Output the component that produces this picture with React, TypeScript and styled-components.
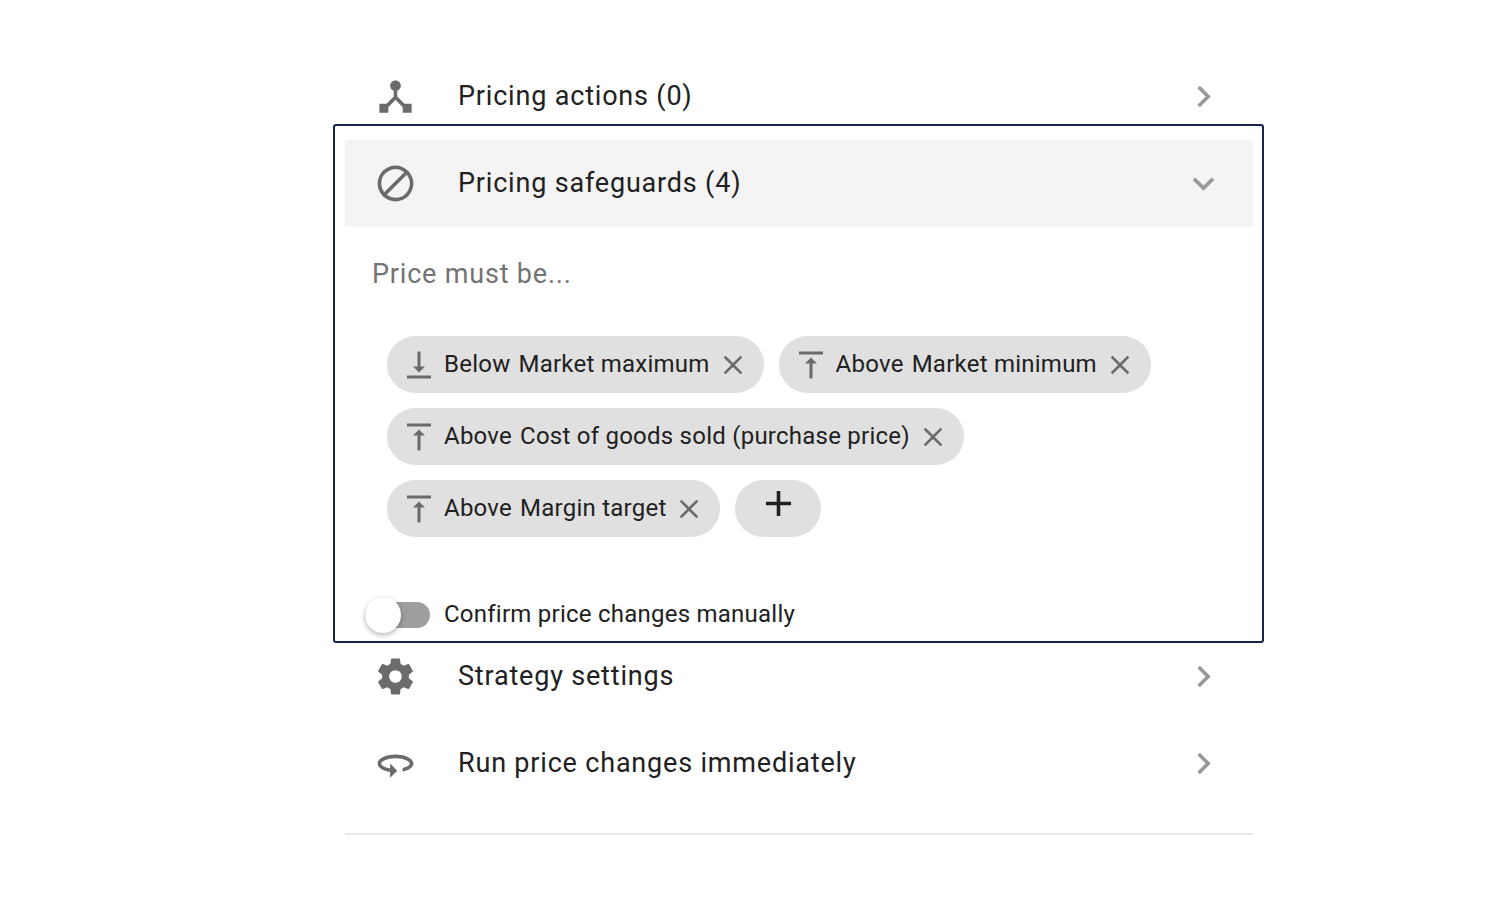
import React, { useState } from "react";
import styled, { createGlobalStyle } from "styled-components";

const GlobalStyle = createGlobalStyle`
  *, *::before { box-sizing: border-box; }
  body {
    margin: 0;
    background: #fff;
    color: #212121;
    font-family: Roboto, "Liberation Sans", sans-serif;
    letter-spacing: 0.015em;
  }
  button { font: inherit; color: inherit; letter-spacing: inherit; }
`;

const Page = styled.main`
  padding: 53px 236px 64px 333px;
`;

const Inset = styled.div`
  margin: 0 11px 0 12px;
`;

const Row = styled.button<{ $open?: boolean }>`
  display: flex;
  align-items: center;
  width: 100%;
  height: 87px;
  padding: 0 28px 0 29px;
  border: 0;
  background: ${(p) => (p.$open ? "#f4f4f4" : "transparent")};
  font-size: 27px;
  letter-spacing: 0.03em;
  text-align: left;
  cursor: pointer;
`;

const RowLabel = styled.span`
  flex: 1;
  margin-left: 41px;
  padding-bottom: 1px;
  line-height: 40px;
`;

const Icon = styled.svg<{ $size: number; $color: string }>`
  display: block;
  flex: none;
  width: ${(p) => p.$size}px;
  height: ${(p) => p.$size}px;
  fill: ${(p) => p.$color};
`;

const Frame = styled.section`
  position: relative;
  margin: -16px 0 -10px;
  padding: 14px 9px 8px 10px;
  border: 2px solid #17234a;
  border-radius: 3px;
`;

const Hint = styled.p`
  margin: 27px 27px 42px;
  color: #737373;
  font-size: 27px;
  letter-spacing: 0.03em;
  line-height: 40px;
`;

const Chips = styled.ul`
  display: flex;
  flex-wrap: wrap;
  gap: 15px;
  margin: 0 42px;
  padding: 0;
  list-style: none;
`;

const Chip = styled.li`
  display: flex;
  align-items: center;
  height: 57px;
  padding: 0 15px 0 14px;
  border-radius: 29px;
  background: #e0e0e0;
  font-size: 24px;
  white-space: nowrap;
`;

const ChipText = styled.span`
  display: flex;
  gap: 8px;
  margin: 0 7px;
  padding-bottom: 2px;
  line-height: 32px;
`;

const RemoveButton = styled.button`
  padding: 0;
  border: 0;
  background: none;
  cursor: pointer;
`;

const AddButton = styled.button`
  display: flex;
  justify-content: center;
  align-items: flex-start;
  width: 86px;
  height: 57px;
  padding: 2px 0 0;
  border: 0;
  border-radius: 29px;
  background: #e0e0e0;
  cursor: pointer;
`;

const SwitchLabel = styled.label`
  display: flex;
  align-items: center;
  gap: 14px;
  width: max-content;
  height: 36px;
  margin: 60px 0 0 20px;
  font-size: 24px;
  cursor: pointer;
`;

const SwitchText = styled.span`
  padding-bottom: 2px;
  line-height: 32px;
`;

const Switch = styled.input`
  position: relative;
  appearance: none;
  width: 65px;
  height: 26px;
  margin: 0;
  border-radius: 13px;
  background: #9e9e9e;
  cursor: pointer;

  &::before {
    content: "";
    position: absolute;
    top: -5px;
    left: 0;
    width: 36px;
    height: 36px;
    border-radius: 50%;
    background: #fff;
    box-shadow: 0 2px 5px rgba(0, 0, 0, 0.3);
  }
  &:checked::before { left: 29px; }
`;

const Divider = styled.hr`
  height: 2px;
  margin: 26px 0 0;
  border: 0;
  background: #e8e8e8;
`;

const paths = {
  hub: "M17 16l-4-4V8.82C14.16 8.4 15 7.3 15 6c0-1.66-1.34-3-3-3S9 4.34 9 6c0 1.3.84 2.4 2 2.82V12l-4 4H3v5h5v-3.05l4-4.2 4 4.2V21h5v-5h-4z",
  block:
    "M12 2a10 10 0 1 0 0 20 10 10 0 0 0 0-20zM4 12a8 8 0 0 1 12.9-6.31L5.69 16.9A7.9 7.9 0 0 1 4 12zm8 8a7.9 7.9 0 0 1-4.9-1.69L18.31 7.1A8 8 0 0 1 12 20z",
  cog: "M19.43 12.98c.04-.32.07-.64.07-.98s-.03-.66-.07-.98l2.11-1.65c.19-.15.24-.42.12-.64l-2-3.46c-.12-.22-.39-.3-.61-.22l-2.49 1c-.52-.4-1.08-.73-1.69-.98l-.38-2.65C14.46 2.18 14.25 2 14 2h-4c-.25 0-.46.18-.49.42l-.38 2.65c-.61.25-1.17.59-1.69.98l-2.49-1c-.23-.09-.49 0-.61.22l-2 3.46c-.13.22-.07.49.12.64l2.11 1.65c-.04.32-.07.65-.07.98s.03.66.07.98l-2.11 1.65c-.19.15-.24.42-.12.64l2 3.46c.12.22.39.3.61.22l2.49-1c.52.4 1.08.73 1.69.98l.38 2.65c.03.24.24.42.49.42h4c.25 0 .46-.18.49-.42l.38-2.65c.61-.25 1.17-.59 1.69-.98l2.49 1c.23.09.49 0 .61-.22l2-3.46c.12-.22.07-.49-.12-.64l-2.11-1.65zM12 15.5c-1.93 0-3.5-1.57-3.5-3.5s1.57-3.5 3.5-3.5 3.5 1.57 3.5 3.5-1.57 3.5-3.5 3.5z",
  orbit:
    "M12 7C6.48 7 2 9.24 2 12c0 2.24 2.94 4.13 7 4.77V20l4-4-4-4v2.73c-3.15-.56-5-1.9-5-2.73 0-1.06 3.04-3 8-3s8 1.94 8 3c0 .73-1.46 1.89-4 2.53v2.05c3.53-.77 6-2.53 6-4.58 0-2.76-4.48-5-10-5z",
  right: "M10 6L8.59 7.41 13.17 12l-4.58 4.59L10 18l6-6z",
  down: "M16.59 8.59L12 13.17 7.41 8.59 6 10l6 6 6-6z",
  below: "M16 13h-3V3h-2v10H8l4 4 4-4zM4 19v2h16v-2H4z",
  above: "M8 11h3v10h2V11h3l-4-4-4 4zM4 3v2h16V3H4z",
  close:
    "M19 6.41L17.59 5 12 10.59 6.41 5 5 6.41 10.59 12 5 17.59 6.41 19 12 13.41 17.59 19 19 17.59 13.41 12z",
  add: "M19 13h-6v6h-2v-6H5v-2h6V5h2v6h6v2z",
};

type IconName = keyof typeof paths;

function Glyph({ name, size = 43, color = "#6b6b6b" }: { name: IconName; size?: number; color?: string }) {
  return (
    <Icon viewBox="0 0 24 24" $size={size} $color={color} aria-hidden="true">
      <path d={paths[name]} />
    </Icon>
  );
}

function SettingRow({ icon, label, open = false }: { icon: IconName; label: string; open?: boolean }) {
  return (
    <Row type="button" $open={open} aria-expanded={open}>
      <Glyph name={icon} />
      <RowLabel>{label}</RowLabel>
      <Glyph name={open ? "down" : "right"} color="#999" />
    </Row>
  );
}

const safeguards: { side: "Above" | "Below"; target: string }[] = [
  { side: "Below", target: "Market maximum" },
  { side: "Above", target: "Market minimum" },
  { side: "Above", target: "Cost of goods sold (purchase price)" },
  { side: "Above", target: "Margin target" },
];

export default function App() {
  const [manual, setManual] = useState(false);
  return (
    <>
      <GlobalStyle />
      <Page>
        <Inset>
          <SettingRow icon="hub" label="Pricing actions (0)" />
        </Inset>
        <Frame>
          <SettingRow icon="block" label="Pricing safeguards (4)" open />
          <Hint>Price must be...</Hint>
          <Chips>
            {safeguards.map(({ side, target }) => (
              <Chip key={target}>
                <Glyph name={side === "Below" ? "below" : "above"} size={36} />
                <ChipText>
                  <span>{side}</span>
                  <span>{target}</span>
                </ChipText>
                <RemoveButton type="button" aria-label={`Remove ${target}`}>
                  <Glyph name="close" size={32} />
                </RemoveButton>
              </Chip>
            ))}
            <li>
              <AddButton type="button" aria-label="Add safeguard">
                <Glyph name="add" color="#212121" />
              </AddButton>
            </li>
          </Chips>
          <SwitchLabel>
            <Switch type="checkbox" checked={manual} onChange={(e) => setManual(e.target.checked)} />
            <SwitchText>Confirm price changes manually</SwitchText>
          </SwitchLabel>
        </Frame>
        <Inset>
          <SettingRow icon="cog" label="Strategy settings" />
          <SettingRow icon="orbit" label="Run price changes immediately" />
          <Divider />
        </Inset>
      </Page>
    </>
  );
}
